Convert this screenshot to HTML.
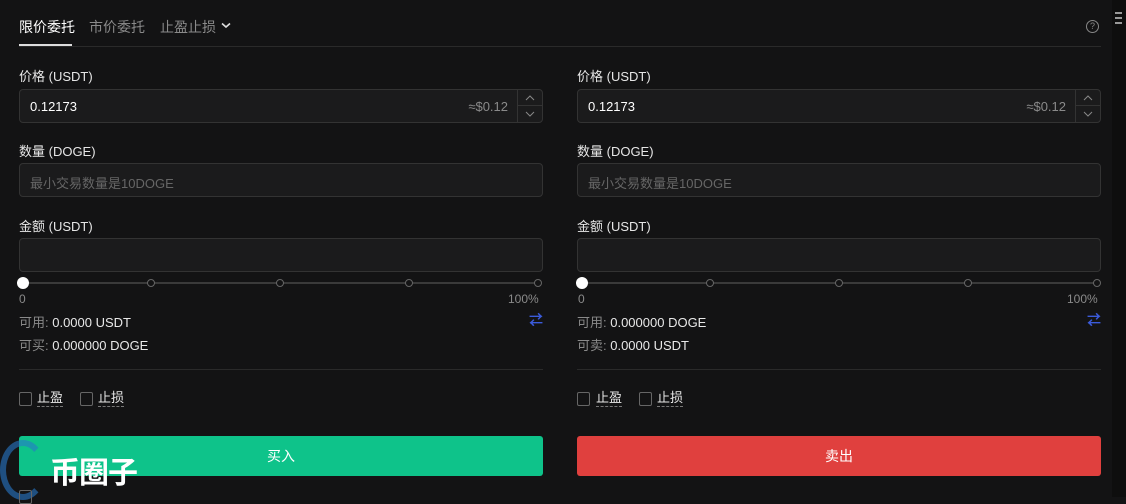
<!DOCTYPE html><html><head><meta charset="utf-8"><style>
body{margin:0;width:1126px;height:497px;background:#131314;font-family:"Liberation Sans","Noto Sans CJK SC",sans-serif;color:#e8e8e8;position:relative;overflow:hidden;font-size:13px}
.a{position:absolute}
.tab{top:17px;font-size:14px;color:#8a8a8a}
.inp{position:absolute;height:34px;background:#1b1b1c;border:1px solid #333;border-radius:4px;box-sizing:border-box}
.lbl{position:absolute;font-size:13px;color:#e6e6e6}
.spin{position:absolute;right:0;top:0;width:24px;height:100%;border-left:1px solid #333}
.spin div{height:50%;box-sizing:border-box;display:flex;align-items:center;justify-content:center}
.spin div:first-child{border-bottom:1px solid #333}
.dot{position:absolute;top:279px;width:8px;height:8px;border:1px solid #666;border-radius:50%;background:#131314;box-sizing:border-box}
.cb{position:absolute;top:392px;width:13px;height:14px;border:1px solid #666;border-radius:2px;box-sizing:border-box}
.u{position:absolute;top:390px;border-bottom:1px dashed #777;font-size:13px;line-height:16px}
.btn{position:absolute;top:436px;height:40px;border-radius:3px;display:flex;align-items:center;justify-content:center;font-size:14px;color:#fff}
.g{color:#8a8a8a}
</style></head><body>
<div class="a tab" style="left:19px;color:#fff">限价委托</div>
<div class="a tab" style="left:89px">市价委托</div>
<div class="a tab" style="left:160px">止盈止损</div>
<svg class="a" style="left:221px;top:22px" width="10" height="7"><path d="M1 1.5L5 5L9 1.5" stroke="#ddd" stroke-width="1.6" fill="none"/></svg>
<div class="a" style="left:19px;top:46px;width:1082px;height:1px;background:#2a2a2a"></div>
<div class="a" style="left:19px;top:44px;width:53px;height:2px;background:#ddd"></div>
<div class="a" style="left:1086px;top:20px;width:11px;height:11px;border:1px solid #888;border-radius:50%;font-size:9px;color:#888;text-align:center;line-height:11px">?</div>
<div class="a" style="left:1112px;top:0;width:14px;height:497px;background:#0e0e0e"></div>
<div class="a" style="left:1115px;top:12px;width:7px;height:14px;background:repeating-linear-gradient(#999 0 2px,transparent 2px 5px)"></div>

<div class="lbl" style="left:19px;top:66px">价格 (USDT)</div>
<div class="inp" style="left:19px;top:89px;width:524px"><span class="a" style="left:10px;top:9px;color:#fff">0.12173</span><span class="a g" style="right:34px;top:9px">≈$0.12</span><div class="spin"><div><svg width="10" height="6"><path d="M1 5L5 1L9 5" stroke="#888" fill="none"/></svg></div><div><svg width="10" height="6"><path d="M1 1L5 5L9 1" stroke="#888" fill="none"/></svg></div></div></div>
<div class="lbl" style="left:19px;top:141px">数量 (DOGE)</div>
<div class="inp" style="left:19px;top:163px;width:524px"><span class="a" style="left:10px;top:9px;color:#666">最小交易数量是10DOGE</span></div>
<div class="lbl" style="left:19px;top:216px">金额 (USDT)</div>
<div class="inp" style="left:19px;top:238px;width:524px"></div>
<div class="a" style="left:22px;top:282px;width:518px;height:2px;background:#3a3a3a"></div>
<div class="dot" style="left:147px"></div><div class="dot" style="left:276px"></div><div class="dot" style="left:405px"></div><div class="dot" style="left:534px"></div>
<div class="a" style="left:17px;top:277px;width:12px;height:12px;border-radius:50%;background:#fff"></div>
<div class="a g" style="left:19px;top:292px;font-size:12px">0</div>
<div class="a g" style="left:508px;top:292px;font-size:12px">100%</div>
<div class="a" style="left:19px;top:312px"><span class="g">可用:</span> 0.0000 USDT</div>
<div class="a" style="left:19px;top:335px"><span class="g">可买:</span> 0.000000 DOGE</div>
<div class="a" style="left:529px;top:310px;color:#3b5bdb;font-size:14px;font-weight:bold">⇄</div>
<div class="a" style="left:19px;top:369px;width:524px;height:1px;background:#2a2a2a"></div>
<div class="cb" style="left:19px"></div><div class="u" style="left:37px">止盈</div>
<div class="cb" style="left:80px"></div><div class="u" style="left:98px">止损</div>
<div class="btn" style="left:19px;width:524px;background:#0ec38a">买入</div>

<div class="lbl" style="left:577px;top:66px">价格 (USDT)</div>
<div class="inp" style="left:577px;top:89px;width:524px"><span class="a" style="left:10px;top:9px;color:#fff">0.12173</span><span class="a g" style="right:34px;top:9px">≈$0.12</span><div class="spin"><div><svg width="10" height="6"><path d="M1 5L5 1L9 5" stroke="#888" fill="none"/></svg></div><div><svg width="10" height="6"><path d="M1 1L5 5L9 1" stroke="#888" fill="none"/></svg></div></div></div>
<div class="lbl" style="left:577px;top:141px">数量 (DOGE)</div>
<div class="inp" style="left:577px;top:163px;width:524px"><span class="a" style="left:10px;top:9px;color:#666">最小交易数量是10DOGE</span></div>
<div class="lbl" style="left:577px;top:216px">金额 (USDT)</div>
<div class="inp" style="left:577px;top:238px;width:524px"></div>
<div class="a" style="left:580px;top:282px;width:518px;height:2px;background:#3a3a3a"></div>
<div class="dot" style="left:706px"></div><div class="dot" style="left:835px"></div><div class="dot" style="left:964px"></div><div class="dot" style="left:1093px"></div>
<div class="a" style="left:576px;top:277px;width:12px;height:12px;border-radius:50%;background:#fff"></div>
<div class="a g" style="left:578px;top:292px;font-size:12px">0</div>
<div class="a g" style="left:1067px;top:292px;font-size:12px">100%</div>
<div class="a" style="left:577px;top:312px"><span class="g">可用:</span> 0.000000 DOGE</div>
<div class="a" style="left:577px;top:335px"><span class="g">可卖:</span> 0.0000 USDT</div>
<div class="a" style="left:1087px;top:310px;color:#3b5bdb;font-size:14px;font-weight:bold">⇄</div>
<div class="a" style="left:577px;top:369px;width:524px;height:1px;background:#2a2a2a"></div>
<div class="cb" style="left:577px"></div><div class="u" style="left:596px">止盈</div>
<div class="cb" style="left:639px"></div><div class="u" style="left:657px">止损</div>
<div class="btn" style="left:577px;width:524px;background:#e0403e">卖出</div>

<div class="a" style="left:0;top:440px;width:46px;height:60px;border-radius:50%;border:6px solid rgba(40,120,200,.6);border-right-color:transparent;box-sizing:border-box"></div>
<div class="a" style="left:50px;top:448px;font-size:30px;font-weight:bold;color:#fff;letter-spacing:-1px">币圈子</div>
<div class="cb" style="left:19px;top:490px"></div>
</body></html>
